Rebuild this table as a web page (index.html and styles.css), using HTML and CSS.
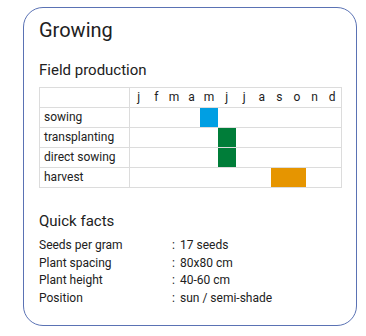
FILE: index.html
```html
<!DOCTYPE html>
<html>
<head>
<meta charset="utf-8">
<link rel="stylesheet" href="styles.css">
</head>
<body>
<div class="card">
  <h1 class="title">Growing</h1>
  <h2 class="subtitle">Field production</h2>
  <div class="calendar">
    <div class="row head">
      <div class="label"></div>
      <div class="m">j</div><div class="m">f</div><div class="m">m</div><div class="m">a</div><div class="m">m</div><div class="m">j</div><div class="m">j</div><div class="m">a</div><div class="m">s</div><div class="m">o</div><div class="m">n</div><div class="m">d</div>
    </div>
    <div class="row">
      <div class="label">sowing</div>
      <div class="bar blue" style="grid-column: 6 / span 1"></div>
    </div>
    <div class="row">
      <div class="label">transplanting</div>
      <div class="bar green" style="grid-column: 7 / span 1"></div>
    </div>
    <div class="row">
      <div class="label">direct sowing</div>
      <div class="bar green" style="grid-column: 7 / span 1"></div>
    </div>
    <div class="row last">
      <div class="label">harvest</div>
      <div class="bar orange" style="grid-column: 10 / span 2"></div>
    </div>
  </div>
  <h2 class="subtitle facts-title">Quick facts</h2>
  <div class="facts">
    <div class="fact"><span class="key">Seeds per gram</span><span class="colon">:</span><span class="val">17 seeds</span></div>
    <div class="fact"><span class="key">Plant spacing</span><span class="colon">:</span><span class="val">80x80 cm</span></div>
    <div class="fact"><span class="key">Plant height</span><span class="colon">:</span><span class="val">40-60 cm</span></div>
    <div class="fact"><span class="key">Position</span><span class="colon">:</span><span class="val">sun / semi-shade</span></div>
  </div>
</div>
</body>
</html>
```
FILE: styles.css
```css
html, body {
  margin: 0;
  padding: 0;
  background: #fff;
}
body {
  font-family: Roboto, "Liberation Sans", sans-serif;
  color: #212121;
}
.card {
  box-sizing: border-box;
  margin: 7px 0 0 23px;
  width: 334px;
  height: 319px;
  border: 1px solid #5a72b4;
  border-radius: 20px;
  padding: 10px 14px 0 15px;
}
.title {
  margin: 0;
  font-size: 20px;
  line-height: 24px;
  font-weight: 400;
}
.subtitle {
  margin: 19px 0 0;
  font-size: 15px;
  line-height: 18px;
  font-weight: 400;
}
.calendar {
  margin-top: 8px;
  border: 1px solid #dcdcdc;
  font-size: 12px;
}
.row {
  display: grid;
  grid-template-columns: 90px repeat(12, 1fr);
  height: 20px;
  border-bottom: 1px solid #dcdcdc;
  box-sizing: border-box;
}
.row.last {
  border-bottom: none;
  height: 19px;
}
.label {
  grid-column: 1;
  grid-row: 1;
  border-right: 1px solid #dcdcdc;
  padding-left: 4px;
  line-height: 19px;
  white-space: nowrap;
}
.m {
  grid-row: 1;
  text-align: center;
  line-height: 19px;
}
.bar {
  grid-row: 1;
}
.blue { background: #009fe3; }
.green { background: #007d39; }
.orange { background: #e69500; }
.facts-title {
  margin-top: 24px;
}
.facts {
  margin-top: 7px;
  font-size: 12px;
  line-height: 17.6px;
}
.fact {
  display: grid;
  grid-template-columns: 133px 8px auto;
}
```
